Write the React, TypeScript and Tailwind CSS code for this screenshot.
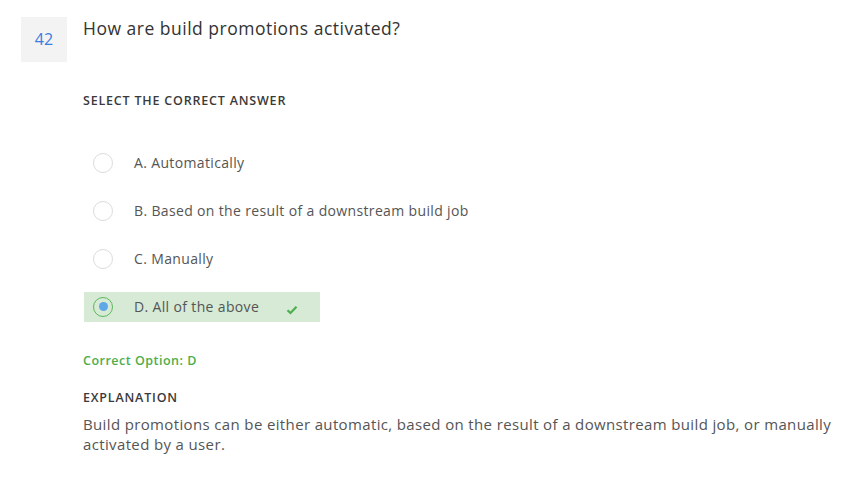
import React from 'react';

const options = [
  { key: 'A', text: 'Automatically' },
  { key: 'B', text: 'Based on the result of a downstream build job' },
  { key: 'C', text: 'Manually' },
  { key: 'D', text: 'All of the above', correct: true },
];

export default function App() {
  return (
    <div
      className="min-h-screen bg-white text-[#333]"
      style={{ fontFamily: '"Open Sans", "Liberation Sans", sans-serif' }}
    >
      <div className="flex gap-4 pl-[21px] pt-[17px]">
        {/* Question number */}
        <div className="w-[46px] h-[45px] bg-[#f3f3f3] flex items-center justify-center pb-[2px] text-[16px] text-[#3b7de0]">
          42
        </div>

        <div className="flex-1 pr-6">
          <h1 className="text-[17.5px] leading-[22px] tracking-[0.5px] text-[#333]">
            How are build promotions activated?
          </h1>

          <div className="mt-[53px] text-[12.5px] font-semibold tracking-[0.8px] text-[#3a3a3a]">
            SELECT THE CORRECT ANSWER
          </div>

          {/* Options */}
          <div className="mt-[37px] flex flex-col gap-[18px]">
            {options.map((o) => (
              <div
                key={o.key}
                className={
                  'flex items-center w-[236px] h-[30px] ml-px pl-[9px] whitespace-nowrap ' +
                  (o.correct ? 'bg-[#d6ead5]' : '')
                }
              >
                <span
                  className={
                    'w-[20px] h-[20px] rounded-full flex items-center justify-center shrink-0 ' +
                    (o.correct ? 'border border-[#5cb85c]' : 'border border-[#dcdcdc]')
                  }
                >
                  {o.correct && <span className="w-[9px] h-[9px] rounded-full bg-[#5ea8e8]" />}
                </span>
                <span className="ml-[21px] text-[14px] tracking-[0.35px] text-[#555]">
                  {o.key}. {o.text}
                </span>
                {o.correct && (
                  <svg className="ml-[27px] mt-[6px]" width="12" height="10" viewBox="0 0 12 10">
                    <path d="M1.5 5.2 L4.5 8 L10.5 1.8" fill="none" stroke="#4cae4c" strokeWidth="2.2" />
                  </svg>
                )}
              </div>
            ))}
          </div>

          <div className="mt-[30px] text-[12.5px] font-semibold tracking-[0.5px] text-[#4cae4c]">
            Correct Option: D
          </div>

          <div className="mt-[18px] text-[12.5px] font-semibold tracking-[0.8px] text-[#3a3a3a]">
            EXPLANATION
          </div>

          <p className="mt-[7px] text-[15px] leading-[20px] tracking-[0.36px] text-[#555]">
            Build promotions can be either automatic, based on the result of a downstream build job, or manually activated by a user.
          </p>
        </div>
      </div>
    </div>
  );
}
